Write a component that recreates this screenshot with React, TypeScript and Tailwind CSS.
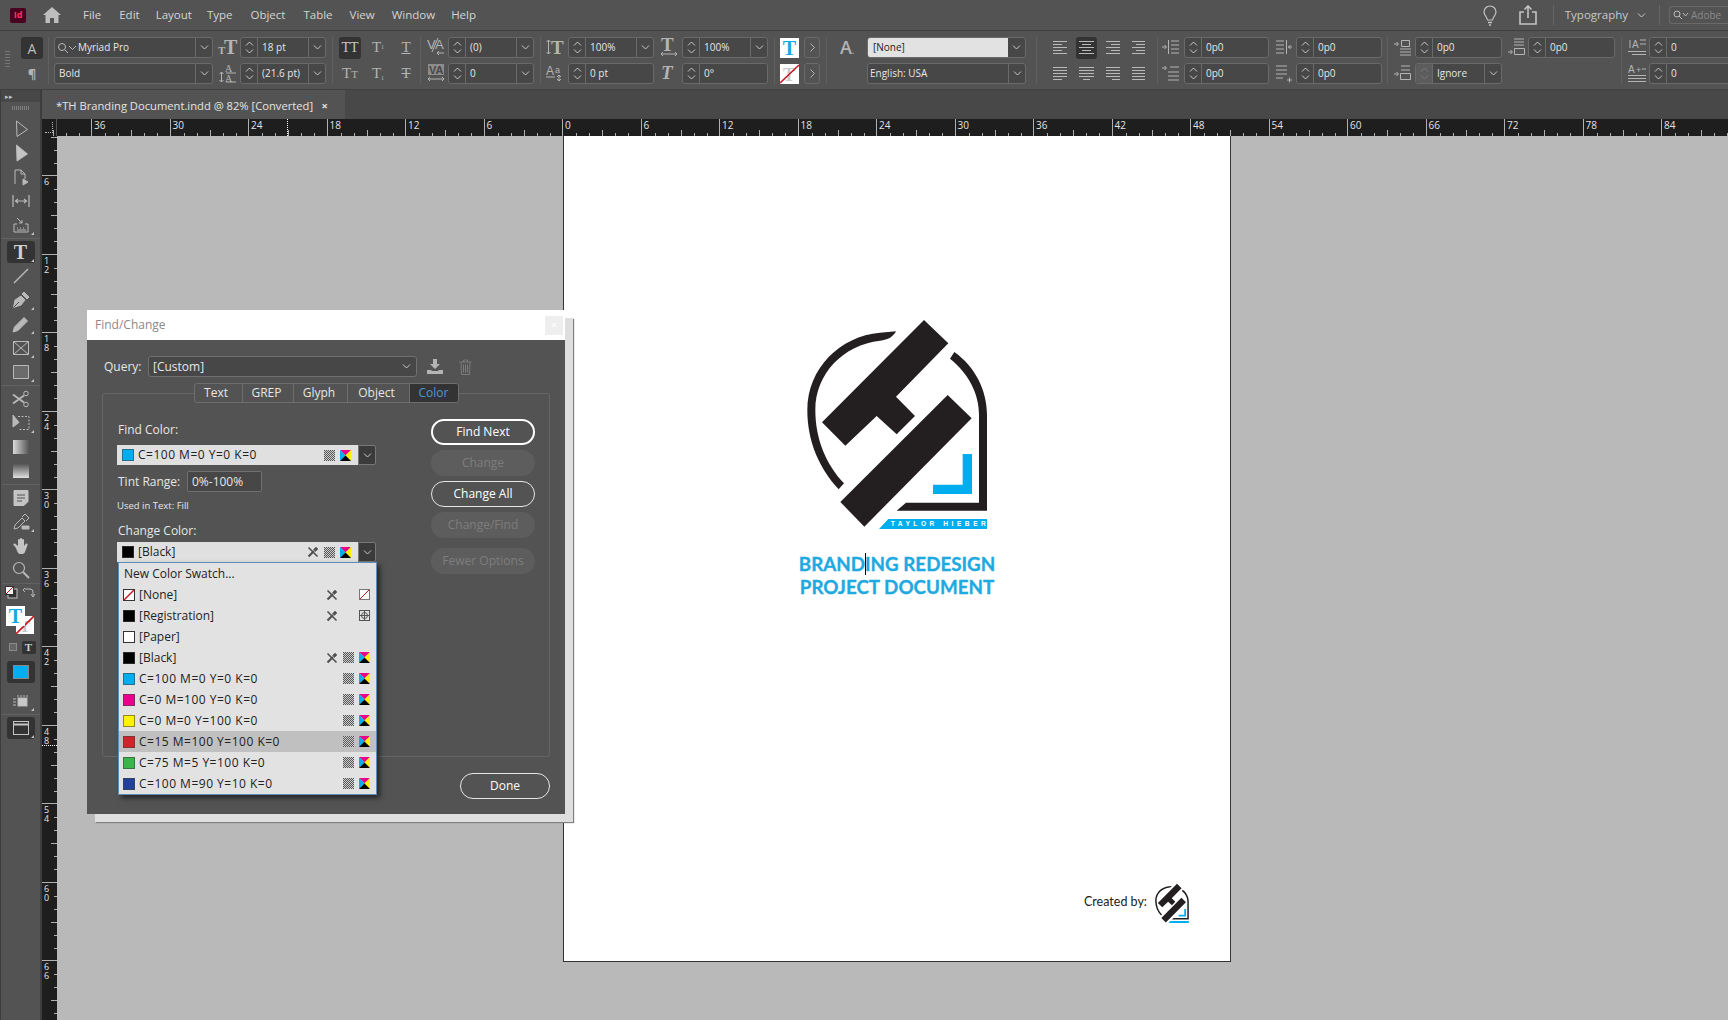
import type { ReactNode } from 'react'

const ink = '#231f20'
const cyan = '#00aeef'

function Chev({ up = false, color = '#c9c9c9' }: { up?: boolean; color?: string }) {
  return (
    <svg width="9" height="5" viewBox="0 0 9 5" fill="none" stroke={color} strokeWidth="1">
      <path d={up ? 'M1 4.5 4.5 1 8 4.5' : 'M1 .5 4.5 4 8 .5'} />
    </svg>
  )
}

function Spin({ dim = false }: { dim?: boolean }) {
  return (
    <div className={`flex h-full w-[17px] shrink-0 flex-col items-center justify-center gap-[3px] rounded-l-[3px] border-r border-[#6a6a6a] ${dim ? 'bg-[#5c5c5c]' : ''}`}>
      <Chev up color={dim ? '#7c7c7c' : '#c9c9c9'} />
      <Chev color={dim ? '#7c7c7c' : '#c9c9c9'} />
    </div>
  )
}

function Field({ value, w, spin = true, drop = false, dim = false, className = '' }: { value: string; w: string; spin?: boolean; drop?: boolean; dim?: boolean; className?: string }) {
  return (
    <div className={`flex h-[21px] shrink-0 items-center rounded-[3px] border border-[#6a6a6a] bg-[#474747] text-[10px] text-[#e6e6e6] ${w} ${className}`}>
      {spin && <Spin dim={dim} />}
      <span className="min-w-0 flex-1 pl-1">{value}</span>
      {drop && (
        <div className="flex h-full w-[17px] shrink-0 items-center justify-center border-l border-[#6a6a6a]">
          <Chev />
        </div>
      )}
    </div>
  )
}

function Col({ children, className = '' }: { children: ReactNode; className?: string }) {
  return <div className={`flex shrink-0 flex-col gap-[5px] ${className}`}>{children}</div>
}

function Divider({ className = '' }: { className?: string }) {
  return <div className={`h-[47px] w-px shrink-0 bg-[#606060] ${className}`} />
}

// 21px control panel glyph: real letters in a small svg so they can be placed by hand
function Glyph({ children, w = 20 }: { children: ReactNode; w?: number }) {
  return (
    <svg width={w} height="21" viewBox={`0 0 ${w} 21`} className="shrink-0" fill="#b4b4b4" stroke="none" fontFamily="'Liberation Serif', serif">
      {children}
    </svg>
  )
}

function Arrow({ d }: { d: string }) {
  return <path d={d} fill="none" stroke="#b4b4b4" strokeWidth="1" />
}

function AlignIcon({ lines }: { lines: [number, number][] }) {
  return (
    <svg width="15" height="16" viewBox="0 0 15 16" stroke="#b9b9b9" strokeWidth="1">
      {lines.map(([a, b], i) => (
        <path key={i} d={`M${a} ${1.5 + i * 3}H${b}`} />
      ))}
    </svg>
  )
}

function ParaIcon({ kind }: { kind: string }) {
  return (
    <svg width="18" height="21" viewBox="0 0 18 21" fill="none" stroke="#b4b4b4" strokeWidth="1" className="shrink-0">
      {kind === 'left' && <path d="M0 10h4M2.500 8l2 2-2 2M6.500 3v14M9 4h8M9 8h8M9 12h8M9 16h8" />}
      {kind === 'right' && <path d="M1 4h8M1 8h8M1 12h8M1 16h8M11.500 3v14M17 10h-4M15.500 8l-2 2 2 2" />}
      {kind === 'first' && <path d="M0 5h4M2.500 3l2 2-2 2M8 4h9M6 9h11M6 13h11M6 17h11" />}
      {kind === 'last' && <path d="M1 3h11M1 7h11M1 11h11M1 15h7M12 17h5M14.500 14.500v5" />}
      {kind === 'before' && <path d="M0 7h4M2.500 5l2 2-2 2M7.500 3.500h8v6h-8zM6 12h11M6 15h11M6 18h11" />}
      {kind === 'after' && <path d="M6 2h10M6 5h10M6 8h10M0 15h4M2.500 13l2 2-2 2M6.500 11.500h10v6h-10z" />}
      {kind === 'grid' && <path d="M0 11h4M2.500 9l2 2-2 2M7 3h9M7 7h9M6.500 10.500h10v6h-10z" />}
    </svg>
  )
}

function ControlPanel() {
  return (
    <div className="flex h-[60px] shrink-0 items-start border-y border-[#3f3f3f] bg-[#535353] pt-[6px]">
      <div className="ml-[5px] mt-[14px] h-[18px] w-[5px] shrink-0 bg-[repeating-linear-gradient(#777_0_1px,transparent_1px_3px)]" />
      <Col className="ml-[11px] w-[22px] items-center">
        <div className="flex h-[22px] w-[22px] items-center justify-center rounded-[3px] bg-[#333] text-[14px] text-[#bdbdbd]">A</div>
        <div className="text-[13px] font-bold leading-5 text-[#b4b4b4]">¶</div>
      </Col>
      <Divider className="ml-[5px]" />
      <Col className="ml-[5px]">
        <div className="flex h-[21px] w-[159px] items-center rounded-[3px] border border-[#6a6a6a] bg-[#474747] text-[10px] text-[#e6e6e6]">
          <svg width="22" height="14" viewBox="0 0 22 14" fill="none" stroke="#b9b9b9" className="ml-[1px] shrink-0">
            <circle cx="6" cy="6" r="3.5" />
            <path d="M8.500 8.500 12 12M13 5l3.500 3.500L20 5" />
          </svg>
          <span className="flex-1">Myriad Pro</span>
          <div className="flex h-full w-[17px] items-center justify-center border-l border-[#6a6a6a]"><Chev /></div>
        </div>
        <Field value="Bold" w="w-[159px]" spin={false} drop className="font-medium" />
      </Col>
      <Col className="ml-[5px]">
        <Glyph>
          <text x="0" y="17" fontSize="11" fontWeight="700">T</text>
          <text x="6" y="17" fontSize="20" fontWeight="700">T</text>
        </Glyph>
        <Glyph>
          <text x="7" y="9" fontSize="10">A</text>
          <text x="7" y="19" fontSize="10">A</text>
          <path d="M8 10h10M8 19h10" stroke="#b4b4b4" />
          <Arrow d="M3.500 9v10M1.500 11l2-2 2 2M1.500 17l2 2 2-2" />
        </Glyph>
      </Col>
      <Col className="ml-[2px]">
        <Field value="18 pt" w="w-[86px]" drop />
        <Field value="(21.6 pt)" w="w-[86px]" drop />
      </Col>
      <Divider className="ml-[6px]" />
      <Col className="ml-[6px] w-[78px]">
        <div className="flex h-[21px] items-center gap-[6px] font-['Liberation_Serif',serif] text-[#b4b4b4]">
          <div className="flex h-[22px] w-[22px] items-center justify-center rounded-[3px] bg-[#333] text-[14px] text-[#c8c8c8]">TT</div>
          <div className="w-[22px] text-center text-[15px]">T<sup className="text-[6px]">1</sup></div>
          <div className="w-[22px] text-center text-[15px] underline">T</div>
        </div>
        <div className="flex h-[21px] items-center gap-[6px] font-['Liberation_Serif',serif] text-[#b4b4b4]">
          <div className="w-[22px] text-center text-[15px]">T<span className="text-[11px]">T</span></div>
          <div className="w-[22px] text-center text-[15px]">T<sub className="text-[6px]">1</sub></div>
          <div className="w-[22px] text-center text-[15px] line-through">T</div>
        </div>
      </Col>
      <Divider className="ml-[3px]" />
      <Col className="ml-[6px]">
        <Glyph w={18}>
          <text x="0" y="12" fontSize="13" fontFamily="'Liberation Sans', sans-serif">V</text>
          <text x="8" y="12" fontSize="13" fontFamily="'Liberation Sans', sans-serif">A</text>
          <path d="M11 1 5 15" stroke="#b4b4b4" />
          <Arrow d="M17 16h-7M12 14l-2 2 2 2" />
        </Glyph>
        <Glyph w={18}>
          <rect x="1" y="1" width="16" height="11" fill="#8c8c8c" />
          <text x="2" y="11" fontSize="11" fontWeight="700" fill="#474747" fontFamily="'Liberation Sans', sans-serif">VA</text>
          <Arrow d="M1 16h16M3 14l-2 2 2 2M15 14l2 2-2 2" />
        </Glyph>
      </Col>
      <Col className="ml-[3px]">
        <Field value="(0)" w="w-[86px]" drop />
        <Field value="0" w="w-[86px]" drop />
      </Col>
      <Divider className="ml-[6px]" />
      <Col className="ml-[4px]">
        <Glyph>
          <text x="6" y="17" fontSize="19" fontWeight="700">T</text>
          <Arrow d="M3.500 3v14M1.500 5l2-2 2 2M1.500 15l2 2 2-2" />
        </Glyph>
        <Glyph>
          <text x="1" y="12" fontSize="12" fontFamily="'Liberation Sans', sans-serif">A</text>
          <text x="10" y="10" fontSize="9" fontFamily="'Liberation Sans', sans-serif">a</text>
          <path d="M1 14h9" stroke="#b4b4b4" />
          <Arrow d="M14 18v-6M12 14l2-2 2 2M12 16l2 2 2-2" />
        </Glyph>
      </Col>
      <Col className="ml-[3px]">
        <Field value="100%" w="w-[86px]" drop />
        <Field value="0 pt" w="w-[86px]" />
      </Col>
      <Col className="ml-[6px]">
        <Glyph w={18}>
          <text x="1" y="14" fontSize="19" fontWeight="700">T</text>
          <Arrow d="M1 17h16M3 15l-2 2 2 2M15 15l2 2-2 2" />
        </Glyph>
        <Glyph w={18}>
          <text x="1" y="16" fontSize="19" fontWeight="700" fontStyle="italic">T</text>
        </Glyph>
      </Col>
      <Col className="ml-[4px]">
        <Field value="100%" w="w-[86px]" drop />
        <Field value="0°" w="w-[86px]" />
      </Col>
      <Divider className="ml-[6px]" />
      <Col className="ml-[5px] w-[40px]">
        <div className="flex h-[21px] items-center gap-[5px]">
          <div className="flex h-5 w-[19px] items-center justify-center bg-white font-['Liberation_Serif',serif] text-[20px] font-bold leading-none text-[#16a8e0]">T</div>
          <div className="flex h-[21px] w-[16px] items-center justify-center rounded-[3px] border border-[#6a6a6a] text-[#b4b4b4]">
            <svg width="5" height="9" viewBox="0 0 5 9" fill="none" stroke="currentColor"><path d="M.5 .5 4.500 4.500.5 8.500" /></svg>
          </div>
        </div>
        <div className="flex h-[21px] items-center gap-[5px]">
          <svg width="19" height="20" viewBox="0 0 19 20" className="shrink-0">
            <rect width="19" height="20" fill="#fff" />
            <text x="3" y="17" fontSize="18" fontWeight="700" fill="#ccc" fontFamily="'Liberation Serif', serif">T</text>
            <path d="M0 19 19 1" stroke="#c4161c" strokeWidth="1.600" />
          </svg>
          <div className="flex h-[21px] w-[16px] items-center justify-center rounded-[3px] border border-[#6a6a6a] text-[#b4b4b4]">
            <svg width="5" height="9" viewBox="0 0 5 9" fill="none" stroke="currentColor"><path d="M.5 .5 4.500 4.500.5 8.500" /></svg>
          </div>
        </div>
      </Col>
      <Divider className="ml-[6px]" />
      <div className="ml-[13px] w-[18px] shrink-0 text-[18px] font-semibold leading-5 text-[#b4b4b4]">A<span className="text-[8px]">.</span></div>
      <Col className="ml-[9px]">
        <div className="flex h-[21px] w-[159px] items-center rounded-[3px] border border-[#6a6a6a] bg-[#474747] text-[10px]">
          <div className="flex h-full flex-1 items-center rounded-l-[2px] bg-[#e2e2e2] pl-[5px] text-[#222]">[None]</div>
          <div className="flex h-full w-[17px] items-center justify-center"><Chev /></div>
        </div>
        <Field value="English: USA" w="w-[159px]" spin={false} drop className="[&>span]:pl-[2px]" />
      </Col>
      <Divider className="ml-[10px]" />
      <Col className="ml-[13px] w-[99px]">
        <div className="flex h-[21px] items-center">
          <div className="flex w-[22px] justify-center"><AlignIcon lines={[[0, 14], [0, 9], [0, 14], [0, 9], [0, 14]]} /></div>
          <div className="ml-[5px] flex h-[22px] w-[22px] items-center justify-center rounded-[3px] bg-[#333]"><AlignIcon lines={[[0, 15], [3, 12], [0, 15], [3, 12], [0, 15]]} /></div>
          <div className="ml-[5px] flex w-[22px] justify-center"><AlignIcon lines={[[1, 15], [6, 15], [1, 15], [6, 15], [1, 15]]} /></div>
          <div className="ml-[5px] flex w-[22px] justify-center"><AlignIcon lines={[[1, 14], [5, 14], [1, 14], [5, 14], [1, 14]]} /></div>
        </div>
        <div className="flex h-[21px] items-center">
          <div className="flex w-[22px] justify-center"><AlignIcon lines={[[0, 14], [0, 14], [0, 14], [0, 14], [0, 9]]} /></div>
          <div className="ml-[5px] flex w-[22px] justify-center"><AlignIcon lines={[[0, 15], [0, 15], [0, 15], [0, 15], [4, 11]]} /></div>
          <div className="ml-[5px] flex w-[22px] justify-center"><AlignIcon lines={[[1, 15], [1, 15], [1, 15], [1, 15], [7, 15]]} /></div>
          <div className="ml-[5px] flex w-[22px] justify-center"><AlignIcon lines={[[1, 14], [1, 14], [1, 14], [1, 14], [1, 14]]} /></div>
        </div>
      </Col>
      <Divider className="ml-[8px]" />
      <Col className="ml-[4px]">
        <ParaIcon kind="left" />
        <ParaIcon kind="first" />
      </Col>
      <Col className="ml-[4px]">
        <Field value="0p0" w="w-[85px]" />
        <Field value="0p0" w="w-[85px]" />
      </Col>
      <Col className="ml-[6px]">
        <ParaIcon kind="right" />
        <ParaIcon kind="last" />
      </Col>
      <Col className="ml-[3px]">
        <Field value="0p0" w="w-[86px]" />
        <Field value="0p0" w="w-[86px]" />
      </Col>
      <Divider className="ml-[5px]" />
      <Col className="ml-[6px]">
        <ParaIcon kind="before" />
        <ParaIcon kind="grid" />
      </Col>
      <Col className="ml-[3px]">
        <Field value="0p0" w="w-[87px]" />
        <Field value="Ignore" w="w-[87px]" dim drop />
      </Col>
      <Col className="ml-[6px]">
        <ParaIcon kind="after" />
      </Col>
      <Col className="ml-[2px]">
        <Field value="0p0" w="w-[87px]" />
      </Col>
      <Divider className="ml-[6px]" />
      <Col className="ml-[6px]">
        <Glyph w={18}>
          <text x="4" y="11" fontSize="10" fontFamily="'Liberation Sans', sans-serif">A</text>
          <path d="M0 14.500h18M4 17.500h14M12 3h6M12 7h6" stroke="#b4b4b4" />
          <Arrow d="M2 3v8" />
        </Glyph>
        <Glyph w={18}>
          <text x="0" y="10" fontSize="10" fontFamily="'Liberation Sans', sans-serif">A</text>
          <text x="8" y="10" fontSize="9" fontFamily="'Liberation Sans', sans-serif">+</text>
          <path d="M14 6h4M0 12.500h18M0 15.500h18M0 18.500h18" stroke="#b4b4b4" />
        </Glyph>
      </Col>
      <Col className="ml-[3px]">
        <Field value="0" w="w-[86px]" />
        <Field value="0" w="w-[86px]" />
      </Col>
    </div>
  )
}

function MenuBar() {
  const items = [
    ['File', 'ml-[22px]'],
    ['Edit', 'ml-[18px]'],
    ['Layout', 'ml-[16px]'],
    ['Type', 'ml-[15px]'],
    ['Object', 'ml-[18px]'],
    ['Table', 'ml-[18px]'],
    ['View', 'ml-[17px]'],
    ['Window', 'ml-[17px]'],
    ['Help', 'ml-[16px]'],
  ]
  return (
    <div className="flex h-[30px] shrink-0 items-center bg-[#535353] text-[11.5px] text-[#d4d4d4]">
      <div className="ml-[10px] flex h-[15px] w-[16px] items-center justify-center rounded-[2px] bg-[#49021f] text-[9px] font-bold text-[#ff3366]">Id</div>
      <svg width="18" height="16" viewBox="0 0 18 16" fill="#bdbdbd" className="ml-[17px] shrink-0">
        <path d="M9 0 0 8h2.500v8h4.500v-5h4v5h4.500V8H18z" />
      </svg>
      {items.map(([label, ml]) => (
        <span key={label} className={ml}>{label}</span>
      ))}
      <div className="flex-1" />
      <svg width="16" height="21" viewBox="0 0 16 21" fill="none" stroke="#c4c4c4" strokeWidth="1.200">
        <path d="M8 1a6 6 0 0 0-6 6c0 3 3 5 3.500 8h5C11 12 14 10 14 7a6 6 0 0 0-6-6z" />
        <path d="M6 17.500h4M7 20h2" strokeWidth="1.600" />
      </svg>
      <svg width="18" height="20" viewBox="0 0 18 20" fill="none" stroke="#c4c4c4" strokeWidth="1.600" className="ml-[21px]">
        <path d="M5 7H1v12h16V7h-4M9 13V1M5.500 4.500 9 1l3.500 3.500" />
      </svg>
      <div className="ml-[16px] h-[20px] w-px bg-[#666]" />
      <span className="ml-[11px] text-[#c8c8c8]">Typography</span>
      <div className="ml-[9px]"><Chev /></div>
      <div className="ml-[13px] h-[20px] w-px bg-[#666]" />
      <div className="ml-[9px] flex h-[18px] w-[59px] items-center overflow-hidden rounded-l-[3px] border-y border-l border-[#6a6a6a] pl-[2px] text-[10px] text-[#8a8a8a]">
        <svg width="18" height="12" viewBox="0 0 18 12" fill="none" stroke="#b9b9b9" className="shrink-0">
          <circle cx="5" cy="5" r="3" />
          <path d="M7 7 10 10M11 4l2.500 3L16 4" />
        </svg>
        <span className="ml-[1px]">Adobe</span>
      </div>
    </div>
  )
}

function Tool({ children, active = false, corner = false }: { children: ReactNode; active?: boolean; corner?: boolean }) {
  return (
    <div className="flex h-6 shrink-0 items-center justify-center">
      <div className={`relative flex h-[22px] w-7 items-center justify-center rounded-[3px] ${active ? 'bg-[#333]' : ''}`}>
        {children}
        {corner && <div className="absolute bottom-[1px] right-[1px] h-0 w-0 border-b-[3px] border-l-[3px] border-b-[#c4c4c4] border-l-transparent" />}
      </div>
    </div>
  )
}

function Sep() {
  return <div className="mx-auto my-px h-px w-[38px] shrink-0 bg-[#626262]" />
}

function TI({ children }: { children: ReactNode }) {
  return (
    <svg width="18" height="18" viewBox="0 0 18 18" fill="none" stroke="#b9b9b9" strokeWidth="1">
      {children}
    </svg>
  )
}

function Tools() {
  return (
    <div className="flex w-[42px] shrink-0 flex-col border-x border-r-2 border-l-[#3d3d3d] border-r-[#3d3d3d] bg-[#535353]">
      <div className="flex h-[12px] shrink-0 items-center bg-[#474747] pl-[4px] text-[7px] leading-none text-[#c4c4c4]">▸▸</div>
      <div className="mx-auto mt-[4px] h-[4px] w-[18px] shrink-0 bg-[repeating-linear-gradient(90deg,#808080_0_1px,transparent_1px_2px)]" />
      <div className="h-[7px] shrink-0" />
      <Tool><TI><path d="M4.500 1 15.500 9.500 5 16.500z" /></TI></Tool>
      <Tool><TI><path d="M4.500 1 15.500 10 5 17z" fill="#c4c4c4" /></TI></Tool>
      <Tool><TI><path d="M3 16V2h6l4 4v5M9 2v4h4" /><path d="M11 11v6l5-3z" fill="#b9b9b9" /></TI></Tool>
      <Tool><TI><path d="M1 3v12M17 3v12M3.500 9h11M6 7 3.500 9 6 11M12 7l2.500 2L12 11" strokeWidth="1.200" /></TI></Tool>
      <Tool corner><TI><path d="M2 8v8h14V8h-3M5 8H2M5 2l5 5M7 7h3V4" /><path d="M5 12h1M8 12h1M11 12h1M5 14h9" /></TI></Tool>
      <Sep />
      <Tool active corner>
        <span className="font-['Liberation_Serif',serif] text-[20px] font-bold leading-none text-[#cfcfcf]">T</span>
      </Tool>
      <Tool><TI><path d="M2 16 16 2" strokeWidth="1.500" /></TI></Tool>
      <Tool corner>
        <TI>
          <path d="M1.500 16.500 3 9l6-4 4 4-4 5z" fill="#b9b9b9" />
          <path d="M1.500 16.500 7 11" stroke="#535353" />
          <path d="M10 3l2-2 5 5-2 2z" fill="#b9b9b9" />
        </TI>
      </Tool>
      <Tool corner><TI><path d="M1 17l1.500-5L12 2.500 15.500 6 6 15.500z" fill="#b9b9b9" /></TI></Tool>
      <Tool corner><TI><path d="M1.500 2.500h15v13h-15zM1.500 2.500l15 13M16.500 2.500l-15 13" /></TI></Tool>
      <Tool corner><TI><path d="M1.500 2.500h15v13h-15z" fill="#6b6b6b" /></TI></Tool>
      <Sep />
      <Tool><TI><circle cx="14" cy="3.500" r="2.300" /><circle cx="14" cy="14.500" r="2.300" /><path d="M1 4.500 12 12.500M1 13.500 12 5.500" strokeWidth="1.800" /></TI></Tool>
      <Tool corner><TI><path d="M1 1v12l6-4.500z" fill="#b9b9b9" /><path d="M6 2.500h11v13H6" strokeDasharray="2 1.500" /></TI></Tool>
      <Tool>
        <div className="h-[14px] w-4 bg-[linear-gradient(90deg,#dadada,#555)]" />
      </Tool>
      <Tool>
        <div className="h-[14px] w-4 bg-[linear-gradient(#555,#e0e0e0)]" />
      </Tool>
      <Sep />
      <Tool><TI><path d="M2 1.500h14v11l-4 4H2z" fill="#c4c4c4" stroke="#c4c4c4" /><path d="M5 6h8M5 9h8M5 12h5" stroke="#535353" /></TI></Tool>
      <Tool corner><TI><path d="M2 16l1-4 7-7 3 3-7 7zM10 4l3-3 4 4-3 3" /><path d="M10 13h7v3h-7z" fill="#b9b9b9" /></TI></Tool>
      <Tool><TI><path d="M4 11 1.500 8c-.5-1 1-2 2-1L6 9V3c0-1.500 2-1.500 2 0v4-5c0-1.500 2-1.500 2 0v5-4c0-1.500 2-1.500 2 0v6l1.500-2c1-1 2.500 0 2 1L13 15c-1 2-2 2-4 2-3 0-3.500-2-5-6z" fill="#c4c4c4" stroke="none" /></TI></Tool>
      <Tool><TI><circle cx="7" cy="7" r="5.500" strokeWidth="1.200" /><path d="M11 11l6 6" strokeWidth="2" /></TI></Tool>
      <Sep />
      <div className="flex h-4 shrink-0 items-center pl-[4px]">
        <svg width="30" height="14" viewBox="0 0 30 14" fill="none">
          <rect x="3" y="3" width="9" height="9" fill="#333" stroke="#c4c4c4" />
          <rect x=".5" y=".5" width="8" height="8" fill="#f4f4f4" stroke="#333" />
          <path d="M1 8 8 1" stroke="#c4161c" />
          <path d="M20 3h5q3 0 3 3v4M18 4l2-2M18 4l2 2M26 8l2 3 2-3" stroke="#b9b9b9" />
        </svg>
      </div>
      <div className="relative ml-[5px] mt-[5px] h-7 w-7 shrink-0">
        <svg width="18" height="18" viewBox="0 0 18 18" className="absolute bottom-0 right-0 bg-white">
          <text x="3" y="16" fontSize="17" fontWeight="700" fill="#c8c8c8" fontFamily="'Liberation Serif', serif">T</text>
          <path d="M0 18 18 0" stroke="#c4161c" strokeWidth="1.600" />
        </svg>
        <div className="absolute left-0 top-0 flex h-5 w-[19px] items-center justify-center bg-white font-['Liberation_Serif',serif] text-[20px] font-bold leading-none text-[#16a8e0]">T</div>
      </div>
      <div className="mt-[5px] flex h-4 shrink-0 items-center justify-center gap-[5px] pl-[3px]">
        <div className="h-2 w-2 border border-[#8a8a8a] bg-[#666]" />
        <div className="flex h-[13px] w-[14px] items-center justify-center rounded-[2px] bg-[#333] font-['Liberation_Serif',serif] text-[11px] font-bold text-[#cfcfcf]">T</div>
      </div>
      <div className="mx-auto mt-[6px] flex h-[22px] w-7 shrink-0 items-center justify-center rounded-[3px] bg-[#333]">
        <div className="h-[14px] w-4 border border-[#888] bg-[#00aeef]" />
      </div>
      <div className="mt-[6px]">
        <Tool corner>
          <svg width="18" height="14" viewBox="0 0 18 14" fill="none" stroke="#b9b9b9">
            <path d="M1 5h3M1 8h3M1 11h3M6 1v2M9 1v2M12 1v2M15 1v2" />
            <rect x="6" y="4" width="9" height="8" fill="#c8c8c8" />
          </svg>
        </Tool>
      </div>
      <Sep />
      <Tool active corner>
        <svg width="16" height="14" viewBox="0 0 16 14" fill="none" stroke="#c4c4c4">
          <rect x=".5" y=".5" width="15" height="13" />
          <path d="M1 3.500h14" strokeWidth="2" />
        </svg>
      </Tool>
    </div>
  )
}

const hLabels = ['', '36', '30', '24', '18', '12', '6', '0', '6', '12', '18', '24', '30', '36', '42', '48', '54', '60', '66', '72', '78', '84']
const vLabels = ['', '6', '12', '18', '24', '30', '36', '42', '48', '54', '60', '66']

function HRuler() {
  return (
    <div className="relative flex h-[17px] shrink-0 overflow-hidden bg-[#1e1e1e]">
      <div className="h-full w-[15px] shrink-0 border-r border-[#555] p-[3px]">
        <div className="h-full w-full border-b border-r border-dotted border-[#bbb]" />
      </div>
      <div className="ml-[-44.500px] flex">
        {hLabels.map((l, i) => (
          <div key={i} className="flex h-full w-[78.500px] shrink-0 flex-col border-l border-[#b0b0b0]">
            <div className="h-[11px] pl-[2px] text-[10px] leading-[12px] text-[#e2e2e2]">{l}</div>
            <svg width="78" height="6" viewBox="0 0 78 6" stroke="#b0b0b0">
              {[13, 26, 39, 52, 65].map((x) => (
                <path key={x} d={`M${x}.5 ${x === 39 ? 0 : 3}V6`} />
              ))}
            </svg>
          </div>
        ))}
      </div>
      <div className="absolute left-[245px] top-0 h-full border-l border-dotted border-white" />
    </div>
  )
}

function VRuler() {
  return (
    <div className="relative w-[15px] shrink-0 overflow-hidden bg-[#1e1e1e]">
      <div className="mt-[-39.500px] flex flex-col">
        {vLabels.map((l, i) => (
          <div key={i} className="flex h-[78.500px] w-[15px] shrink-0 justify-end border-t border-[#b0b0b0]">
            <div className="w-[9px] pl-[2px] pt-[1px] text-[9px] leading-[9px] text-[#e2e2e2]">
              {l.split('').map((c, j) => (
                <div key={j}>{c}</div>
              ))}
            </div>
            <svg width="6" height="78" viewBox="0 0 6 78" stroke="#b0b0b0">
              {[13, 26, 39, 52, 65].map((y) => (
                <path key={y} d={`M${y === 39 ? 0 : 3} ${y}.5H6`} />
              ))}
            </svg>
          </div>
        ))}
      </div>
      <div className="absolute left-0 top-[609px] w-full border-t border-dotted border-white" />
    </div>
  )
}

function Logo({ className = '', label = true }: { className?: string; label?: boolean }) {
  return (
    <svg viewBox="0 0 720 720" className={className}>
      <path d="M432 60 505 130 348 290 405 348 350 403 290 348 196 437 126 367z" fill={ink} />
      <path d="M503 285 575 355 253 680 181 606z" fill={ink} />
      <path d="M348 94C340 110 325 120 300 122 190 135 106 220 106 330 106 420 140 495 192 550L176 568C118 505 82 425 82 330 82 205 180 108 300 98z" fill={ink} />
      <path d="M523 156C585 200 621 270 621 345V632H350L378 608H597V345C597 280 565 220 510 176z" fill={ink} />
      <path d="M548 462H576V582H459V554H548z" fill={cyan} />
      <path d="M325 657H621V687H297z" fill={cyan} />
      {label && (
        <text x="332" y="679" fontSize="20" fontWeight="700" letterSpacing="10.500" fill="#fff" fontFamily="'Liberation Sans', sans-serif">TAYLOR HIEBER</text>
      )}
    </svg>
  )
}

function Page() {
  return (
    <div className="flex h-[826px] w-[668px] shrink-0 flex-col items-center border-x border-b border-[#333] bg-white pt-[164px]">
      <div className="flex w-full justify-start pl-[216px]">
        <Logo className="h-[240px] w-[240px] shrink-0" />
      </div>
      <div className="mt-[12px] text-center font-['Lato',sans-serif] text-[18.800px] font-bold leading-[23px] text-[#1fa9e1] [-webkit-text-stroke:0.35px_#1fa9e1]">
        <div>
          BRAND
          <span className="relative">
            <span className="absolute left-0 top-[1px] h-[22px] w-px bg-black" />
          </span>
          ING REDESIGN
        </div>
        <div>PROJECT DOCUMENT</div>
      </div>
      <div className="mt-auto flex w-full items-center pb-[36px] pl-[520px]">
        <span className="font-['Lato',sans-serif] text-[12.500px] text-[#222]">Created by:</span>
        <Logo className="ml-[3px] h-[45px] w-[45px] shrink-0" label={false} />
      </div>
    </div>
  )
}

function Checker() {
  const cells: number[][] = []
  for (let y = 0; y < 11; y++) {
    for (let x = 0; x < 11; x++) {
      if ((x + y) % 2 === 0) cells.push([x, y])
    }
  }
  return (
    <svg width="11" height="11" viewBox="0 0 11 11" className="shrink-0">
      <rect width="11" height="11" fill="#cfcfcf" />
      {cells.map(([x, y]) => (
        <rect key={`${x}-${y}`} x={x} y={y} width="1" height="1" fill="#555" />
      ))}
    </svg>
  )
}

function Cmyk() {
  return (
    <svg width="11" height="11" viewBox="0 0 11 11" className="shrink-0">
      <path d="M0 0h11L5.500 5.500z" fill="#ec008c" />
      <path d="M0 0v11L5.500 5.500z" fill="#00aeef" />
      <path d="M11 0v11L5.500 5.500z" fill="#fff200" />
      <path d="M0 11h11L5.500 5.500z" fill="#000" />
    </svg>
  )
}

function NoEdit() {
  return (
    <svg width="12" height="12" viewBox="0 0 12 12" className="shrink-0" stroke="#505050" fill="none">
      <path d="M1.500 1.500 10.500 10.500" strokeWidth="1.600" />
      <path d="M1.500 10.500 7 5" strokeWidth="2.200" />
      <path d="M6.500 3.500 8.500 5.500 11 3 9 1z" fill="#505050" strokeWidth=".5" />
    </svg>
  )
}

function Swatch({ color, none = false, border = false }: { color: string; none?: boolean; border?: boolean }) {
  if (none) {
    return (
      <svg width="12" height="12" viewBox="0 0 12 12" className="shrink-0">
        <rect x=".5" y=".5" width="11" height="11" fill="#fff" stroke="#333" />
        <path d="M1 11 11 1" stroke="#c4161c" strokeWidth="1.500" />
      </svg>
    )
  }
  return <div className={`h-3 w-3 shrink-0 border ${border ? 'border-[#333]' : 'border-[#444]/60'} ${color}`} />
}

function ColorSelect({ swatch, label, lock = false, wide = false }: { swatch: string; label: string; lock?: boolean; wide?: boolean }) {
  return (
    <div className="flex h-5 w-[259px] shrink-0 text-[12px] text-[#222]">
      <div className="flex flex-1 items-center bg-[#e0e0e0] pl-[5px] pr-[7px]">
        <Swatch color={swatch} />
        <span className={`ml-1 flex-1 ${wide ? 'tracking-[0.5px]' : ''}`}>{label}</span>
        {lock && <NoEdit />}
        <div className="ml-[5px]"><Checker /></div>
        <div className="ml-[5px]"><Cmyk /></div>
      </div>
      <div className="flex w-[18px] items-center justify-center rounded-r-[2px] border border-[#777] bg-[#3b3b3b]"><Chev /></div>
    </div>
  )
}

function Btn({ label, mode = 'on', className = '' }: { label: string; mode?: 'on' | 'strong' | 'off'; className?: string }) {
  const look = mode === 'off' ? 'bg-[#5d5d5d] text-[#7d7d7d]' : mode === 'strong' ? 'border-2 border-white text-white' : 'border border-[#e6e6e6] text-white'
  return <div className={`flex h-[26px] shrink-0 items-center justify-center rounded-full text-[12px] ${look} ${className}`}>{label}</div>
}

const swatchRows = [
  { label: '[None]', none: true, lock: true, end: 'none' },
  { label: '[Registration]', color: 'bg-black', lock: true, end: 'reg' },
  { label: '[Paper]', color: 'bg-white', border: true },
  { label: '[Black]', color: 'bg-black', lock: true, end: 'proc' },
  { label: 'C=100 M=0 Y=0 K=0', color: 'bg-[#00aeef]', end: 'proc', wide: true },
  { label: 'C=0 M=100 Y=0 K=0', color: 'bg-[#ec008c]', end: 'proc', wide: true },
  { label: 'C=0 M=0 Y=100 K=0', color: 'bg-[#fff200]', end: 'proc', wide: true },
  { label: 'C=15 M=100 Y=100 K=0', color: 'bg-[#d2232a]', end: 'proc', on: true, wide: true },
  { label: 'C=75 M=5 Y=100 K=0', color: 'bg-[#39b54a]', end: 'proc', wide: true },
  { label: 'C=100 M=90 Y=10 K=0', color: 'bg-[#21409a]', end: 'proc', wide: true },
]

function SwatchMenu() {
  return (
    <div className="absolute left-[31px] top-[252px] w-[259px] border border-[#5f8db8] bg-[#e2e2e2] text-[12px] text-[#222] shadow-[3px_3px_5px_rgba(0,0,0,0.55)]">
      <div className="flex h-[21px] items-center pl-[5px]">New Color Swatch...</div>
      {swatchRows.map((r) => (
        <div key={r.label} className={`flex h-[21px] items-center pl-[4px] pr-[6px] ${r.on ? 'bg-[#c0c0c0]' : ''}`}>
          <Swatch color={r.color ?? ''} none={r.none} border={r.border} />
          <span className={`ml-1 flex-1 ${r.wide ? 'tracking-[0.5px]' : ''}`}>{r.label}</span>
          {r.lock && <NoEdit />}
          {r.end === 'proc' && (
            <>
              <div className="ml-[5px]"><Checker /></div>
              <div className="ml-[5px]"><Cmyk /></div>
            </>
          )}
          {r.end === 'none' && (
            <svg width="11" height="11" viewBox="0 0 11 11" className="ml-[21px] shrink-0">
              <rect x=".5" y=".5" width="10" height="10" fill="#fff" stroke="#777" />
              <path d="M1 10 10 1" stroke="#c4161c" />
            </svg>
          )}
          {r.end === 'reg' && (
            <svg width="11" height="11" viewBox="0 0 11 11" fill="none" stroke="#555" className="ml-[21px] shrink-0">
              <rect x=".5" y=".5" width="10" height="10" />
              <circle cx="5.500" cy="5.500" r="3" />
              <path d="M5.500 1v9M1 5.500h9" />
            </svg>
          )}
        </div>
      ))}
    </div>
  )
}

function FindChange() {
  return (
    <div className="absolute left-[87px] top-[310px] flex h-[504px] w-[478px] flex-col bg-[#535353] font-['Open_Sans',sans-serif] text-[12px] text-[#e6e6e6] shadow-[8px_8px_0_0_#dedede,9px_9px_1px_0_#808080]">
      <div className="flex h-[30px] shrink-0 items-center justify-between bg-white pl-2 pr-[2px] text-[#8a8a8a]">
        <span>Find/Change</span>
        <div className="flex h-[19px] w-[18px] items-center justify-center bg-[#eeeeee] text-[10px] text-white">×</div>
      </div>
      <div className="mt-[16px] flex h-[21px] shrink-0 items-center pl-[17px]">
        <span className="w-[44px]">Query:</span>
        <div className="flex h-[21px] w-[269px] items-center justify-between rounded-[3px] border border-[#707070] bg-[#474747] pl-[4px] pr-[5px]">
          <span>[Custom]</span>
          <Chev />
        </div>
        <svg width="16" height="15" viewBox="0 0 16 15" fill="#b4b4b4" className="ml-[10px]">
          <path d="M6 0h4v5h3L8 10 3 5h3zM0 11h4l1 1h6l1-1h4v4H0z" />
        </svg>
        <svg width="13" height="16" viewBox="0 0 13 16" fill="none" stroke="#7c7c7c" className="ml-[16px]">
          <path d="M.5 3h12M4.500 3V1h4v2M2 3l.5 12.500h8L11 3M4.500 5.500v8M6.500 5.500v8M8.500 5.500v8" />
        </svg>
      </div>
      <div className="mx-[15px] mt-[16px] flex h-[364px] shrink-0 flex-col rounded-[3px] border border-[#666666]">
        <div className="mt-[-11px] flex justify-center">
          <div className="flex h-[20px] w-[265px] rounded-[3px] border border-[#6e6e6e] bg-[#535353]">
            <div className="flex w-[48px] items-center justify-center border-r border-[#6e6e6e] pr-[4px]">Text</div>
            <div className="flex w-[51px] items-center justify-center border-r border-[#6e6e6e] pr-[2px]">GREP</div>
            <div className="flex w-[54px] items-center justify-center border-r border-[#6e6e6e] pr-[2px]">Glyph</div>
            <div className="flex w-[62px] items-center justify-center border-r border-[#6e6e6e] pr-[3px]">Object</div>
            <div className="flex flex-1 items-center justify-center rounded-r-[2px] bg-[#333] text-[#4b98d6]">Color</div>
          </div>
        </div>
        <div className="flex pl-[14px]">
          <div className="mt-[18px] flex w-[259px] shrink-0 flex-col">
            <div className="flex h-[18px] items-center pl-px">Find Color:</div>
            <div className="mt-[6px]"><ColorSelect swatch="bg-[#00aeef]" label="C=100 M=0 Y=0 K=0" wide /></div>
            <div className="mt-[6px] flex h-[21px] items-center pl-px">
              <span className="w-[69px]">Tint Range:</span>
              <div className="flex h-[21px] w-[75px] items-center rounded-[2px] border border-[#707070] bg-[#474747] pl-[4px]">0%-100%</div>
            </div>
            <div className="mt-[7px] flex h-[14px] items-center text-[9.500px]">Used in Text: Fill</div>
            <div className="mt-[9px] flex h-[18px] items-center pl-px">Change Color:</div>
            <div className="mt-[2px]"><ColorSelect swatch="bg-black" label="[Black]" lock /></div>
          </div>
          <div className="ml-[55px] mt-[16px] flex w-[104px] shrink-0 flex-col gap-[5px]">
            <Btn label="Find Next" mode="strong" />
            <Btn label="Change" mode="off" />
            <Btn label="Change All" />
            <Btn label="Change/Find" mode="off" />
            <Btn label="Fewer Options" mode="off" className="mt-[5px]" />
          </div>
        </div>
      </div>
      <div className="mt-[16px] flex justify-end pr-[15px]">
        <Btn label="Done" className="w-[90px]" />
      </div>
      <SwatchMenu />
    </div>
  )
}

export default function App() {
  return (
    <div className="relative flex h-[1020px] w-[1728px] flex-col overflow-hidden bg-[#535353] font-['Open_Sans',sans-serif]">
      <MenuBar />
      <ControlPanel />
      <div className="flex min-h-0 flex-1">
        <Tools />
        <div className="flex min-w-0 flex-1 flex-col">
          <div className="flex h-[29px] shrink-0 bg-[#484848]">
            <div className="flex w-[303px] items-center justify-between bg-[#535353] pl-[14px] pr-[17px] pt-[3px] text-[11.200px] text-[#e4e4e4]">
              <span>*TH Branding Document.indd @ 82% [Converted]</span>
              <span className="font-bold">×</span>
            </div>
          </div>
          <HRuler />
          <div className="flex min-h-0 flex-1">
            <VRuler />
            <div className="flex-1 bg-[#b9b9b9] pl-[506px]">
              <Page />
            </div>
          </div>
        </div>
      </div>
      <FindChange />
    </div>
  )
}
